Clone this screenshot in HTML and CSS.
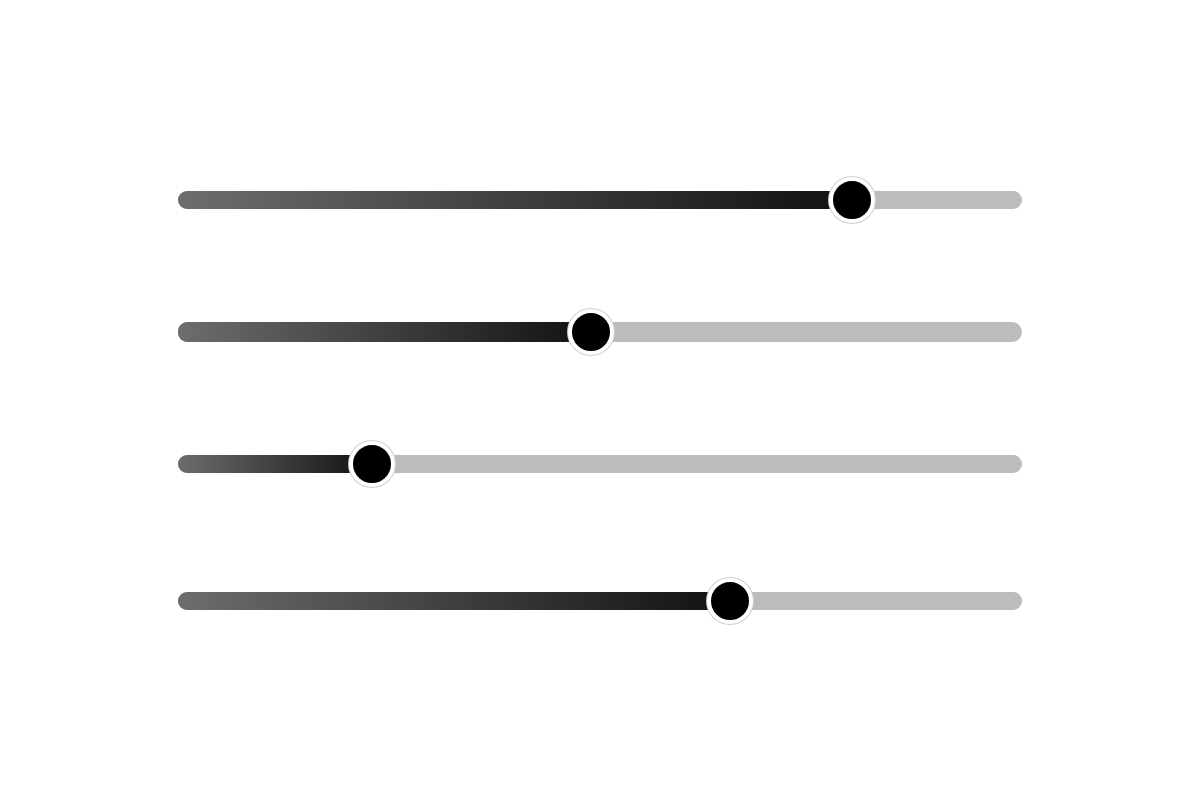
FILE: index.html
```html
<!DOCTYPE html>
<html lang="en">
<head>
    <meta charset="UTF-8">
    <meta name="viewport" content="width=device-width, initial-scale=1.0">
    <title>Sliders</title>
    <link rel="stylesheet" href="styles.css">
</head>
<body>
    <div class="sliders">
        <!-- Slider 1 -->
        <div class="slider">
            <div class="track">
                <div class="fill" style="width: 79.9%"></div>
                <div class="knob" style="left: 79.9%"></div>
            </div>
        </div>

        <!-- Slider 2 -->
        <div class="slider slider-thick">
            <div class="track">
                <div class="fill" style="width: 48.9%"></div>
                <div class="knob" style="left: 48.9%"></div>
            </div>
        </div>

        <!-- Slider 3 -->
        <div class="slider">
            <div class="track">
                <div class="fill" style="width: 23%"></div>
                <div class="knob" style="left: 23%"></div>
            </div>
        </div>

        <!-- Slider 4 -->
        <div class="slider slider-last">
            <div class="track">
                <div class="fill" style="width: 65.4%"></div>
                <div class="knob" style="left: 65.4%"></div>
            </div>
        </div>
    </div>
</body>
</html>
```

FILE: styles.css
```css
* {
    margin: 0;
    padding: 0;
    box-sizing: border-box;
}

body {
    background: #fff;
    width: 1200px;
    height: 800px;
    overflow: hidden;
}

.sliders {
    padding-top: 176px;
    display: flex;
    flex-direction: column;
    gap: 84px;
}

.slider {
    height: 48px;
    display: flex;
    align-items: center;
    justify-content: center;
}

.slider-last {
    margin-top: 5px;
}

.track {
    position: relative;
    width: 844px;
    height: 18px;
    background: #bbbcbe;
    border-radius: 9px;
}

.slider-thick .track {
    height: 20px;
    border-radius: 10px;
}

.fill {
    height: 100%;
    border-radius: 9px 0 0 9px;
    background: linear-gradient(to right, #6d6d6d, #111);
}

.knob {
    position: absolute;
    top: 50%;
    width: 46px;
    height: 46px;
    transform: translate(-50%, -50%);
    border-radius: 50%;
    background: #000;
    border: 4px solid #fff;
    box-shadow: 0 0 0 1px #cfcfcf;
}
```
